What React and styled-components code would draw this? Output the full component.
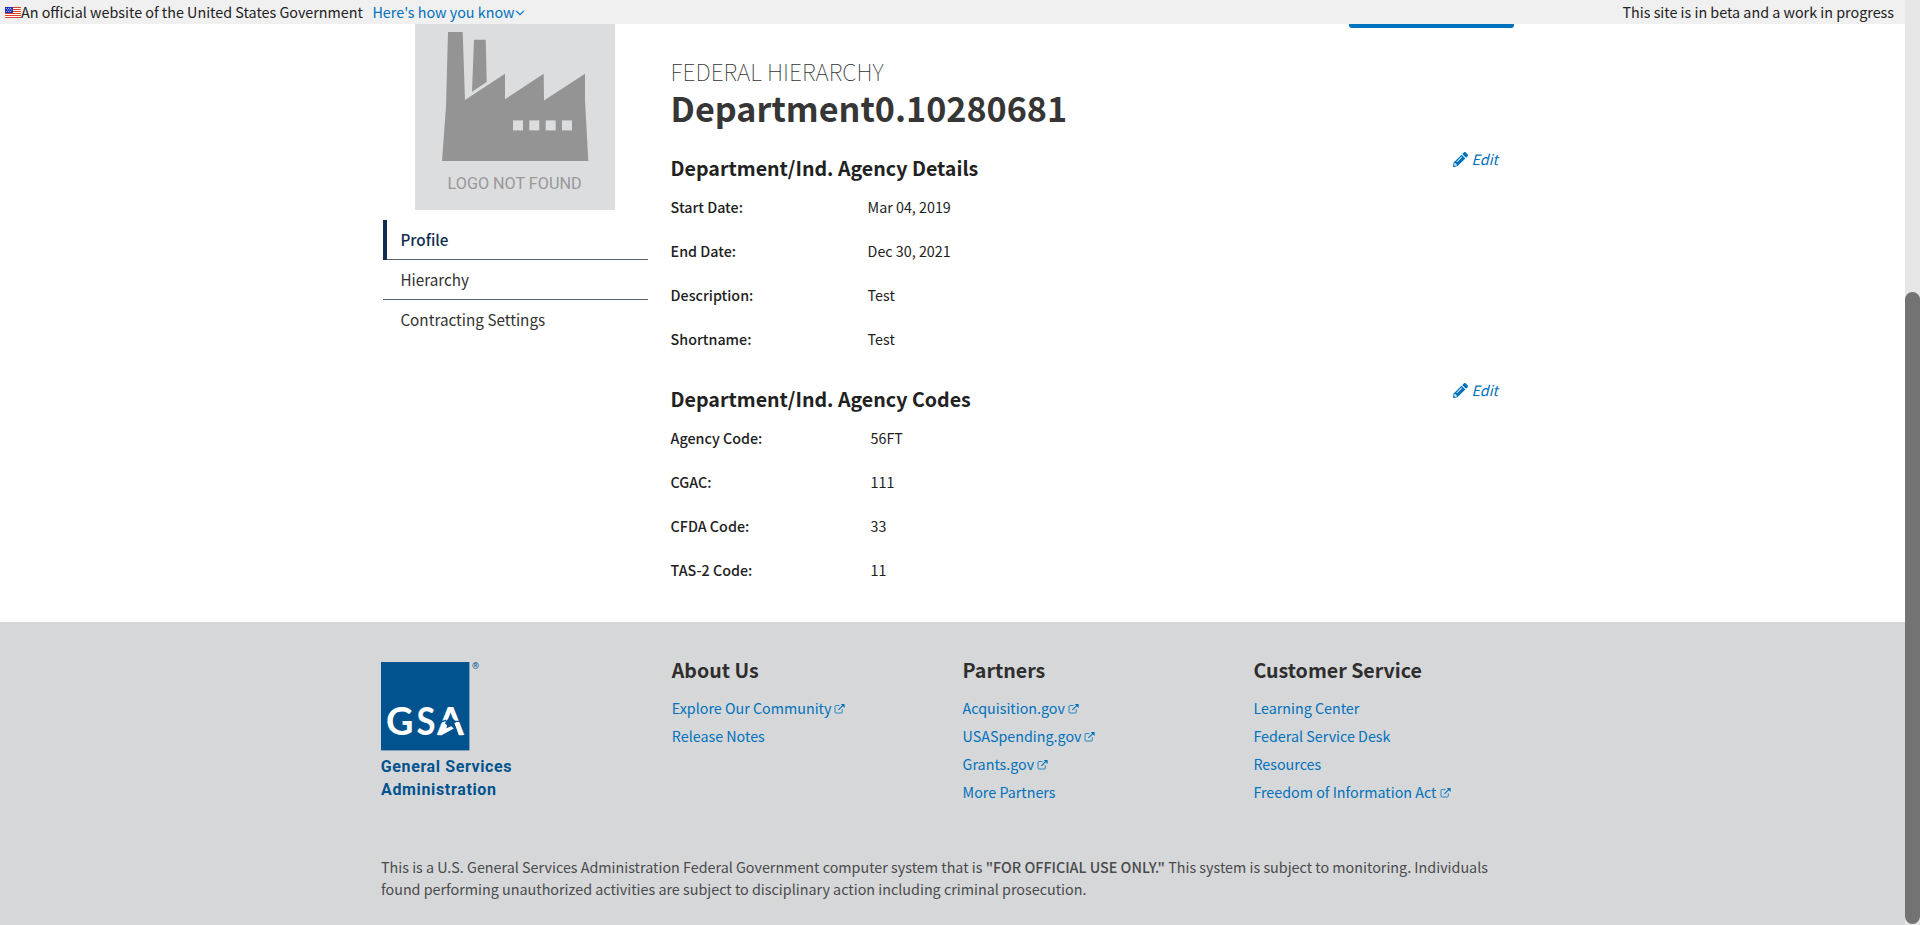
import React from 'react';
import styled, { createGlobalStyle } from 'styled-components';
import { FaPencilAlt } from 'react-icons/fa';

const GlobalStyle = createGlobalStyle`
  *, *::before, *::after { box-sizing: border-box; }
  html, body { margin: 0; padding: 0; }
  body {
    height: 925px;
    overflow: hidden;
    background: #fff;
    color: #212121;
    font-family: "Noto Sans CJK SC", "Open Sans", sans-serif;
    font-size: 14.3px;
    line-height: 22px;
  }
  h1, h2, h3, p, ul, dl, dd, dt { margin: 0; padding: 0; font-weight: 400; }
  ul { list-style: none; }
  a { color: #0071bc; text-decoration: none; }
`;

const Window = styled.div`
  display: flex;
  height: 925px;
`;

const Page = styled.div`
  flex: 1;
  display: flex;
  flex-direction: column;
  min-width: 0;
`;

const ScrollTrack = styled.div`
  flex: 0 0 15px;
  padding: 292px 0 1px;
  background: #e6e6e6;
`;

const ScrollThumb = styled.div`
  height: 100%;
  border-radius: 8px;
  background: #737373;
`;

const Banner = styled.header`
  display: flex;
  align-items: center;
  height: 24px;
  flex: none;
  padding: 0 11px 0 5px;
  background: #f0f0f0;
  font-size: 14.33px;
  line-height: 24px;
  white-space: nowrap;
`;

const FlagIcon = styled.svg`
  width: 16px;
  height: 11px;
  margin-top: 1px;
`;

const BannerLink = styled.a`
  display: flex;
  align-items: center;
  margin-left: 9.5px;
`;

const ChevronIcon = styled.svg`
  width: 10px;
  height: 6px;
  margin-top: 1px;
`;

const BetaNote = styled.span`
  margin-left: auto;
`;

const Main = styled.main`
  display: flex;
  flex: none;
  height: 598px;
  padding-left: 383px;
`;

const Sidebar = styled.aside`
  width: 265px;
  margin-right: 22.6px;
`;

const AgencyLogo = styled.svg`
  display: block;
  width: 200px;
  height: 186px;
  margin: 0 0 10px 32px;
`;

const NavItem = styled.li`
  height: 40px;
  padding-left: 13.4px;
  border-left: 4px solid ${(p) => (p.$active ? '#112e51' : 'transparent')};
  background: linear-gradient(#5b616b, #5b616b) -4px 39px / 269px 1px no-repeat;
  background-origin: padding-box;
  background-clip: border-box;
  color: ${(p) => (p.$active ? '#112e51' : '#323232')};
  font-size: 15.25px;
  font-weight: ${(p) => (p.$active ? 500 : 400)};
  line-height: 39px;

  &:last-child { background: none; }
`;

const Content = styled.div`
  width: 843.4px;
`;

const ActionButton = styled.div`
  width: 165px;
  height: 4px;
  margin: 0 0 28px auto;
  border-radius: 0 0 3px 3px;
  background: #0071bc;
`;

const Eyebrow = styled.p`
  color: #323232;
  font-size: 23px;
  font-weight: 100;
  line-height: 30px;
  text-transform: uppercase;
`;

const Title = styled.h1`
  && { margin: -1px 0 19px; }
  color: #363636;
  font-size: 34.15px;
  font-weight: 700;
  line-height: 44px;
`;

const Section = styled.section`
  margin-bottom: 18px;
`;

const SectionHeader = styled.div`
  display: flex;
  justify-content: space-between;
  align-items: flex-start;
  padding-right: 16px;
  margin-bottom: 3px;
`;

const SectionTitle = styled.h2`
  padding-top: 5px;
  font-size: 19.62px;
  font-weight: 700;
  line-height: 29px;
`;

const EditLink = styled.a`
  display: flex;
  align-items: center;
  gap: 3.5px;
  font-style: italic;

  svg { width: 15px; height: 15px; }
`;

const Field = styled.div`
  display: grid;
  grid-template-columns: ${(p) => p.$labelWidth}px 1fr;
  line-height: 44px;
`;

const FieldLabel = styled.dt`
  && { font-weight: 500; }
`;

const Footer = styled.footer`
  flex: 1;
  padding: 33px 0 0 381px;
  background: #d6d7d9;
`;

const FooterColumns = styled.div`
  display: grid;
  grid-template-columns: repeat(4, 290.8px);
  height: 201px;
`;

const GsaLogo = styled.svg`
  width: 150px;
  height: 150px;
  margin-top: 7px;
`;

const FooterHeading = styled.h3`
  margin-bottom: 10px;
  color: #2e2e2e;
  font-size: 19.6px;
  font-weight: 700;
  line-height: 29px;
`;

const FooterItem = styled.li`
  line-height: 28px;
`;

const LinkOutIcon = styled.svg`
  width: 11px;
  height: 11px;
  margin-left: 3px;
`;

const Disclaimer = styled.p`
  width: 1130px;
  color: #494a4c;
  font-size: 14.34px;

  strong { font-weight: 500; }
`;

const Flag = () => (
  <FlagIcon viewBox="0 0 16 11">
    <rect width="16" height="11" fill="#fff" />
    {[0, 2, 4, 6, 8, 10].map((y) => (
      <rect key={y} y={y} width="16" height="1" fill="#e0402a" />
    ))}
    <rect width="8" height="6" fill="#1e33b1" />
    {[[1, 1], [3, 1], [5, 1], [2, 2.5], [4, 2.5], [6, 2.5], [1, 4], [3, 4], [5, 4]].map(([x, y]) => (
      <rect key={`${x}-${y}`} x={x} y={y} width="0.8" height="0.8" fill="#fff" />
    ))}
  </FlagIcon>
);

const Chevron = () => (
  <ChevronIcon viewBox="0 0 10 6">
    <path d="M1.2 0.8 L5 4.6 L8.8 0.8" fill="none" stroke="#0071bc" strokeWidth="1.2" />
  </ChevronIcon>
);

const LinkOut = () => (
  <LinkOutIcon viewBox="0 0 11 11">
    <path
      d="M5.5 2.5 H2 Q1 2.5 1 3.5 V9 Q1 10 2 10 H7.3 Q8.3 10 8.3 9 V6.3"
      fill="none"
      stroke="#0071bc"
      strokeWidth="0.8"
    />
    <path d="M4.4 6.9 L9 2.3" stroke="#0071bc" strokeWidth="1.1" />
    <path d="M6.7 1 H10.6 V4.9 Z" fill="#0071bc" />
  </LinkOutIcon>
);

const FactoryLogo = () => (
  <AgencyLogo viewBox="0 14 200 186">
    <rect width="200" height="200" fill="#dcdddf" />
    <g fill="#949494">
      <path d="M33 22 H47.7 L50 90 L90 63.7 V89.3 L128.7 63.7 L129 90.5 L170 63.7 V90 L173.3 151 H27 L31 96.7 Z" />
      <path d="M59 29.7 H70.7 L71.7 72 L57 81.7 Z" />
    </g>
    {[98, 114.3, 130.7, 147].map((x) => (
      <rect key={x} x={x} y="110.4" width="10" height="10" fill="#dcdddf" />
    ))}
    <text x="32.6" y="179.4" textLength="134" lengthAdjust="spacingAndGlyphs" fill="#989898" fontFamily="Roboto, sans-serif" fontSize="17">
      LOGO NOT FOUND
    </text>
  </AgencyLogo>
);

const Gsa = () => (
  <GsaLogo viewBox="0 0 150 150" fill="#00538e">
    <rect width="88.4" height="88.4" />
    <g fill="#fff" fontFamily="Lato, sans-serif" fontWeight="700" fontSize="39">
      <text x="5" y="73.3" textLength="27.5" lengthAdjust="spacingAndGlyphs">G</text>
      <text x="35.6" y="73.3" textLength="19" lengthAdjust="spacingAndGlyphs">S</text>
      <text x="56" y="73.3" textLength="27" lengthAdjust="spacingAndGlyphs">A</text>
    </g>
    <path d="M64.8 59.2 L69.6 54.6 L74.6 59.2 L77.6 73.6 H60.8 Z" />
    <path d="M60 60.2 L65 58.2 M73.6 59.4 L79 59.4" stroke="#00538e" strokeWidth="1.3" />
    <path d="M62.6 61 L66 63 L65.4 66.2 L70.2 64.2 L72.8 66.6 L60.6 73.3 H57.2 Z" fill="#fff" />
    <path d="M73.4 61 L76.8 60 L82 73.3 H78 Z" fill="#fff" />
    <text x="91" y="7" fontFamily="Roboto, sans-serif" fontSize="9">®</text>
    <g fontFamily="Roboto, sans-serif" fontWeight="700" fontSize="16">
      <text x="-0.2" y="110" textLength="130.7">General Services</text>
      <text x="0" y="133.4" textLength="115">Administration</text>
    </g>
  </GsaLogo>
);

const sections = [
  {
    title: 'Department/Ind. Agency Details',
    labelWidth: 197,
    fields: [
      ['Start Date:', 'Mar 04, 2019'],
      ['End Date:', 'Dec 30, 2021'],
      ['Description:', 'Test'],
      ['Shortname:', 'Test'],
    ],
  },
  {
    title: 'Department/Ind. Agency Codes',
    labelWidth: 200,
    fields: [
      ['Agency Code:', '56FT'],
      ['CGAC:', '111'],
      ['CFDA Code:', '33'],
      ['TAS-2 Code:', '11'],
    ],
  },
];

const footerColumns = [
  { title: 'About Us', links: [['Explore Our Community', true], ['Release Notes']] },
  {
    title: 'Partners',
    links: [['Acquisition.gov', true], ['USASpending.gov', true], ['Grants.gov', true], ['More Partners']],
  },
  {
    title: 'Customer Service',
    links: [['Learning Center'], ['Federal Service Desk'], ['Resources'], ['Freedom of Information Act', true]],
  },
];

export default function App() {
  return (
    <>
      <GlobalStyle />
      <Window>
        <Page>
          <Banner>
            <Flag />
            <span>An official website of the United States Government</span>
            <BannerLink>
              Here's how you know
              <Chevron />
            </BannerLink>
            <BetaNote>This site is in beta and a work in progress</BetaNote>
          </Banner>
          <Main>
            <Sidebar>
              <FactoryLogo />
              <ul>
                <NavItem $active>Profile</NavItem>
                <NavItem>Hierarchy</NavItem>
                <NavItem>Contracting Settings</NavItem>
              </ul>
            </Sidebar>
            <Content>
              <ActionButton />
              <Eyebrow>Federal Hierarchy</Eyebrow>
              <Title>Department0.10280681</Title>
              {sections.map((section) => (
                <Section key={section.title}>
                  <SectionHeader>
                    <SectionTitle>{section.title}</SectionTitle>
                    <EditLink>
                      <FaPencilAlt />
                      Edit
                    </EditLink>
                  </SectionHeader>
                  <dl>
                    {section.fields.map(([label, value]) => (
                      <Field key={label} $labelWidth={section.labelWidth}>
                        <FieldLabel>{label}</FieldLabel>
                        <dd>{value}</dd>
                      </Field>
                    ))}
                  </dl>
                </Section>
              ))}
            </Content>
          </Main>
          <Footer>
            <FooterColumns>
              <Gsa />
              {footerColumns.map((column) => (
                <div key={column.title}>
                  <FooterHeading>{column.title}</FooterHeading>
                  <ul>
                    {column.links.map(([label, external]) => (
                      <FooterItem key={label}>
                        <a>
                          {label}
                          {external && <LinkOut />}
                        </a>
                      </FooterItem>
                    ))}
                  </ul>
                </div>
              ))}
            </FooterColumns>
            <Disclaimer>
              This is a U.S. General Services Administration Federal Government computer system that is{' '}
              <strong>"FOR OFFICIAL USE ONLY."</strong> This system is subject to monitoring. Individuals found
              performing unauthorized activities are subject to disciplinary action including criminal prosecution.
            </Disclaimer>
          </Footer>
        </Page>
        <ScrollTrack>
          <ScrollThumb />
        </ScrollTrack>
      </Window>
    </>
  );
}
